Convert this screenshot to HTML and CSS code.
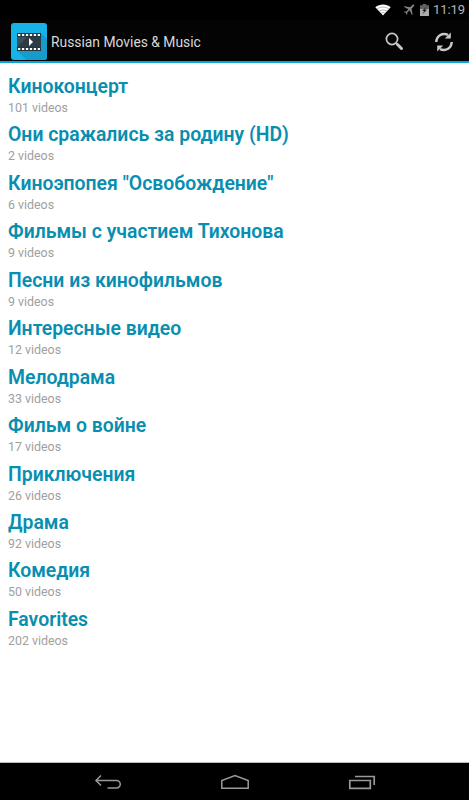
FILE: index.html
```html
<!DOCTYPE html>
<html lang="ru">
<head>
<meta charset="utf-8">
<title>Russian Movies &amp; Music</title>
<link rel="stylesheet" href="styles.css">
</head>
<body>
<div class="status">
  <svg class="wifi" width="16" height="12" viewBox="0 0 16 12"><path d="M0.300 3.300C4.800-.3 11.200-.3 15.700 3.300L8 11.600z" fill="#fff"/><path d="M1.800 5.300c3.800-3 8.600-3 12.400 0M3.700 7.500c2.700-2 5.900-2 8.600 0M5.600 9.400c1.500-1.100 3.300-1.100 4.800 0" fill="none" stroke="#000" stroke-opacity=".4" stroke-width=".7"/></svg>
  <svg class="plane" width="12" height="12" viewBox="0 0 12 12"><path d="M11.200.8c-.5-.5-1.200-.2-1.700.3L7.100 3.300 1.400 2.200l-.6.6 4.700 2.400-2.400 2.500-1.700-.2-.5.500 2 .9.900 2 .5-.5-.2-1.700 2.500-2.400 2.400 4.700.6-.6-1.100-5.700 2.200-2.400c.5-.5.900-1.100.5-1.500z" fill="#888"/></svg>
  <svg class="battery" width="9" height="12" viewBox="0 0 9 12"><path d="M2.600 0h3.800v1.300H9V12H0V1.300h2.600z" fill="#606060"/><path d="M0 5h9v7H0z" fill="#aaa"/><path d="M6.600 2.500 2.200 6.800l2 .4-1.700 3 4.500-4.400-2.100-.4z" fill="#222"/></svg>
  <span class="clock">11:19</span>
</div>
<header class="bar">
  <svg class="logo" width="36" height="37" viewBox="0 0 36 37">
    <rect width="36" height="37" rx="3" fill="#16b3e6"/>
    <path d="M6 27.500 15.500 37H33q3 0 3-3V16l-6-6z" fill="#159cca"/>
    <rect x="6" y="10" width="24" height="18" fill="#26333c"/>
    <path d="M6 14h24v10H6z" fill="#3c4f5b"/>
    <path d="M6 24 16 14h14v10z" fill="#2c3c47"/>
    <path d="M7 12h22M7 26h22" stroke="#fff" stroke-width="2" stroke-dasharray="2.300 1.640"/>
    <path d="M18 15v8l4-4z" fill="#fff"/>
  </svg>
  <h1>Russian Movies &amp; Music</h1>
  <svg class="search" width="19" height="19" viewBox="0 0 19 19" fill="none" stroke="#c8c8c8"><circle cx="7" cy="7" r="5.600" stroke-width="1.700"/><path d="m10.800 10.800 1.500 1.500" stroke-width="1.600"/><path d="m12.500 12.500 4 4" stroke-width="3" stroke-linecap="round"/></svg>
  <svg class="refresh" width="20" height="20" viewBox="0 0 20 20"><path d="M2.300 10C2.500 4 8 .3 14 2.800M17.700 10C17.500 16 12 19.700 6 17.200" fill="none" stroke="#c8c8c8" stroke-width="2.500"/><path d="M16.800.6v6h-6zM3.200 19.400v-6h6z" fill="#c8c8c8"/></svg>
</header>
<main class="list">
  <section><h2>Киноконцерт</h2><p>101 videos</p></section>
  <section><h2>Они сражались за родину (HD)</h2><p>2 videos</p></section>
  <section><h2>Киноэпопея "Освобождение"</h2><p>6 videos</p></section>
  <section><h2>Фильмы с участием Тихонова</h2><p>9 videos</p></section>
  <section><h2>Песни из кинофильмов</h2><p>9 videos</p></section>
  <section><h2>Интересные видео</h2><p>12 videos</p></section>
  <section><h2>Мелодрама</h2><p>33 videos</p></section>
  <section><h2>Фильм о войне</h2><p>17 videos</p></section>
  <section><h2>Приключения</h2><p>26 videos</p></section>
  <section><h2>Драма</h2><p>92 videos</p></section>
  <section><h2>Комедия</h2><p>50 videos</p></section>
  <section><h2>Favorites</h2><p>202 videos</p></section>
</main>
<nav class="nav">
  <svg width="28" height="16" viewBox="0 0 28 16" fill="none" stroke="#999" stroke-width="1.500"><path d="M2 6.500h20.500a3.500 3.500 0 0 1 0 7.500H13.500M7 1.500l-5 5 5 5"/></svg>
  <svg width="30" height="16" viewBox="0 0 30 16" fill="none" stroke="#999" stroke-width="1.500"><path d="M1.800 14.300V6.500L15 1.500l13.200 5v7.800z"/></svg>
  <svg width="28" height="16" viewBox="0 0 28 16" fill="none" stroke="#999" stroke-width="1.700"><path d="M1.800 6.500h20.500v7.800H1.800zM7 2.500h19.200V11"/></svg>
</nav>
</body>
</html>
```

FILE: styles.css
```css
* { box-sizing: border-box; margin: 0; padding: 0; }
body {
  width: 469px;
  height: 800px;
  display: flex;
  flex-direction: column;
  overflow: hidden;
  background: #fff;
  font-family: Roboto, sans-serif;
}
svg { display: block; flex: none; }
.status {
  height: 20px;
  display: flex;
  justify-content: flex-end;
  align-items: center;
  padding: 0 4px 0 0;
  background: #000;
}
.wifi { margin-right: 12px; }
.plane { margin-right: 5px; }
.battery { margin-right: 4px; }
.clock {
  width: 32px;
  color: #b5b5b5;
  font-size: 13px;
  line-height: 20px;
  letter-spacing: -0.1px;
  white-space: nowrap;
}
.bar {
  height: 43px;
  display: flex;
  align-items: center;
  padding: 2px 15px 0 11px;
  background: #040404;
  border-bottom: 2px solid #08a5dd;
}
.bar h1 {
  flex: 1;
  margin-left: 4px;
  padding-top: 1px;
  color: #d8d8d8;
  font-size: 13.85px;
  font-weight: 400;
  white-space: nowrap;
}
.search { margin-right: 30px; }
.list {
  flex: 1;
  padding: 11px 8px 0;
  border-bottom: 1px solid #bbb;
}
.list section { height: 48.45px; }
.list h2 {
  color: #078eb0;
  font-size: 19.4px;
  font-weight: 600;
  line-height: 25px;
  white-space: nowrap;
}
.list p {
  color: #a0a0a0;
  font-size: 12.4px;
  line-height: 17px;
}
.nav {
  height: 37px;
  display: flex;
  justify-content: space-between;
  align-items: center;
  padding: 1px 93px 0 94px;
  background: #000;
}
```
